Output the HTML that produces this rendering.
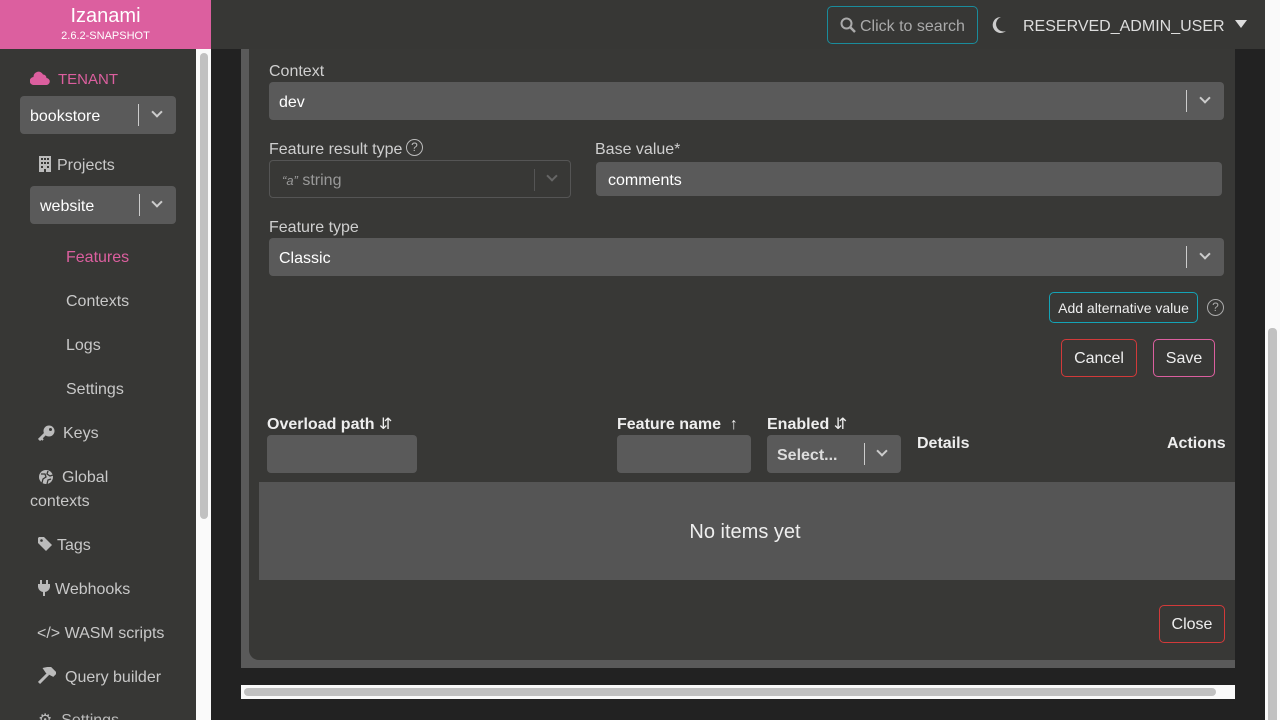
<!DOCTYPE html>
<html style="overflow:hidden;height:720px"><head><meta charset="utf-8"><style>
*{box-sizing:border-box;margin:0;padding:0}
html,body{overflow:hidden}
body{width:1280px;height:720px;background:#222;font-family:"Liberation Sans",sans-serif;color:#e8e8e8;position:relative;font-size:16px;line-height:1.65}
.abs{position:absolute}
.side{left:0;top:0;width:196px;height:720px;background:#373735}
.brand{left:0;top:0;width:211px;height:49px;background:#dc5f9f;text-align:center;color:#fff;line-height:1.15}
.sbar{left:196px;top:49px;width:15px;height:671px;background:#fafafa}
.sbar i{position:absolute;left:4px;top:4px;width:8px;height:466px;background:#c1c1c1;border-radius:4px}
.top{left:211px;top:0;width:1054px;height:49px;background:#373735}
.vs{left:1265px;top:0;width:15px;height:720px;background:#fafafa}
.vs i{position:absolute;left:3px;top:328px;width:9px;height:400px;background:#c1c1c1;border-radius:4px}
.sel{background:#5a5a5a;border-radius:4px;color:#fff}
.nav{color:#c8c8c8;font-size:16px}
.chev{position:absolute;width:8px;height:8px;border-right:2px solid #ccc;border-bottom:2px solid #ccc;transform:rotate(45deg)}
.sep{position:absolute;width:1px;background:#ccc}
.lbl{color:#cfcfcf;font-size:16px}
.btn{border-radius:5px;background:transparent;color:#eee;display:flex;align-items:center;justify-content:center;line-height:1}
.th{font-weight:bold;color:#eee;font-size:16px}
</style></head><body>
<div class="abs side"></div>
<div class="abs brand"><div style="font-size:20px;padding-top:5px">Izanami</div><div style="font-size:11px;margin-top:2px">2.6.2-SNAPSHOT</div></div>
<div class="abs sbar"><i></i></div>
<div class="abs top"></div>
<div class="abs vs"><i></i></div>

<svg class="abs" style="left:30px;top:71px" width="20" height="14" viewBox="0 0 20 14"><path d="M4 14a4 4 0 0 1-.5-8A5 5 0 0 1 13 3.5 3.5 3.5 0 0 1 16.5 7 3.5 3.5 0 0 1 16 14z" fill="#dc5f9f"/></svg>
<div class="abs" style="left:58px;top:68px;color:#dc5f9f;font-size:15px">TENANT</div>
<div class="abs sel" style="left:20px;top:96px;width:156px;height:38px"><span class="abs" style="left:10px;top:8px">bookstore</span><div class="sep" style="left:118px;top:8px;height:22px"></div><div class="chev" style="left:133px;top:12px"></div></div>
<svg class="abs" style="left:38px;top:156px" width="14" height="16" viewBox="0 0 14 16"><path d="M1 0h12v16H8v-3H6v3H1z" fill="#bbb"/><g fill="#373735"><rect x="3" y="2" width="2" height="2"/><rect x="6" y="2" width="2" height="2"/><rect x="9" y="2" width="2" height="2"/><rect x="3" y="6" width="2" height="2"/><rect x="6" y="6" width="2" height="2"/><rect x="9" y="6" width="2" height="2"/><rect x="3" y="10" width="2" height="2"/><rect x="9" y="10" width="2" height="2"/></g></svg>
<div class="abs nav" style="left:57px;top:153px">Projects</div>
<div class="abs sel" style="left:30px;top:186px;width:146px;height:38px"><span class="abs" style="left:10px;top:8px">website</span><div class="sep" style="left:109px;top:8px;height:22px"></div><div class="chev" style="left:123px;top:12px"></div></div>
<div class="abs" style="left:66px;top:245px;color:#dc5f9f">Features</div>
<div class="abs nav" style="left:66px;top:289px">Contexts</div>
<div class="abs nav" style="left:66px;top:333px">Logs</div>
<div class="abs nav" style="left:66px;top:377px">Settings</div>
<svg class="abs" style="left:38px;top:425px" width="17" height="16" viewBox="0 0 17 16"><circle cx="11" cy="6" r="5.5" fill="#bbb"/><circle cx="12.5" cy="4.5" r="1.5" fill="#373735"/><path d="M7 9L1 15" stroke="#bbb" stroke-width="3"/><path d="M3 13l2 2" stroke="#bbb" stroke-width="2"/></svg>
<div class="abs nav" style="left:63px;top:421px">Keys</div>
<svg class="abs" style="left:38px;top:469px" width="16" height="16" viewBox="0 0 16 16"><circle cx="8" cy="8" r="7" fill="#bbb"/><path d="M3 5h4l1 3-3 2-1 4M10 2l-1 3 3 2 3-1M9 15l1-4 3-1" stroke="#373735" stroke-width="1.3" fill="none"/></svg>
<div class="abs nav" style="left:62px;top:465px">Global</div>
<div class="abs nav" style="left:30px;top:489px">contexts</div>
<svg class="abs" style="left:38px;top:537px" width="14" height="14" viewBox="0 0 14 14"><path d="M0 1v5l8 8 6-6-8-8H1z" fill="#bbb"/><circle cx="3.5" cy="3.5" r="1.3" fill="#373735"/></svg>
<div class="abs nav" style="left:57px;top:533px">Tags</div>
<svg class="abs" style="left:38px;top:580px" width="12" height="16" viewBox="0 0 12 16"><path d="M2 0h2v4h4V0h2v4h2v3a6 6 0 0 1-5 5v4H5v-4A6 6 0 0 1 0 7V4h2z" fill="#bbb"/></svg>
<div class="abs nav" style="left:55px;top:577px">Webhooks</div>
<div class="abs nav" style="left:37px;top:621px">&lt;/&gt; WASM scripts</div>
<svg class="abs" style="left:38px;top:667px" width="18" height="18" viewBox="0 0 18 18"><path d="M1 16l9-9M7 2l5-1 5 5-2 2-6-3z" stroke="#bbb" stroke-width="3" fill="#bbb"/></svg>
<div class="abs nav" style="left:65px;top:665px">Query builder</div>
<div class="abs nav" style="left:38px;top:708px;color:#bbb">&#9881;&nbsp; Settings</div>

<div class="abs" style="left:827px;top:6px;width:151px;height:38px;border:1px solid #1a8c9c;border-radius:5px"></div>
<svg class="abs" style="left:840px;top:17px" width="16" height="16" viewBox="0 0 16 16"><circle cx="6.5" cy="6.5" r="5" stroke="#aaa" stroke-width="2" fill="none"/><path d="M10 10l5 5" stroke="#aaa" stroke-width="2.5"/></svg>
<div class="abs" style="left:860px;top:14px;color:#aaa">Click to search</div>
<svg class="abs" style="left:991px;top:16px" width="16" height="17" viewBox="0 0 16 17"><path d="M10 1a8 8 0 1 0 5 14A7 7 0 0 1 10 1z" fill="#ccc"/></svg>
<div class="abs" style="left:1023px;top:14px;color:#ddd">RESERVED_ADMIN_USER</div>
<div class="abs" style="left:1235px;top:20px;width:0;height:0;border-left:6px solid transparent;border-right:6px solid transparent;border-top:8px solid #ddd"></div>

<div class="abs" style="left:241px;top:49px;width:994px;height:619px;background:#5a5a5a"></div>
<div class="abs" style="left:249px;top:49px;width:986px;height:611px;background:#383836;border-bottom-left-radius:10px"></div>
<div class="abs" style="left:241px;top:685px;width:994px;height:14px;background:#fafafa"><i class="abs" style="left:3px;top:3px;width:972px;height:8px;background:#c1c1c1;border-radius:4px"></i></div>

<div class="abs lbl" style="left:269px;top:59px">Context</div>
<div class="abs sel" style="left:269px;top:82px;width:955px;height:38px"><span class="abs" style="left:10px;top:8px">dev</span><div class="sep" style="left:917px;top:8px;height:22px"></div><div class="chev" style="left:932px;top:12px"></div></div>
<div class="abs lbl" style="left:269px;top:137px">Feature result type</div>
<div class="abs" style="left:406px;top:139px;width:17px;height:17px;border:1.5px solid #bbb;border-radius:50%;font-size:12px;color:#bbb;text-align:center;line-height:15px">?</div>
<div class="abs" style="left:269px;top:160px;width:302px;height:38px;border:1px solid #555;border-radius:4px"><span class="abs" style="left:12px;top:7px;color:#999"><i style="font-size:13px">“a”</i> string</span><div class="sep" style="left:264px;top:8px;height:22px;background:#555"></div><div class="chev" style="left:278px;top:11px;border-color:#666"></div></div>
<div class="abs lbl" style="left:595px;top:137px">Base value*</div>
<div class="abs sel" style="left:596px;top:162px;width:626px;height:34px"><span class="abs" style="left:12px;top:6px">comments</span></div>
<div class="abs lbl" style="left:269px;top:215px">Feature type</div>
<div class="abs sel" style="left:269px;top:238px;width:955px;height:38px"><span class="abs" style="left:10px;top:8px">Classic</span><div class="sep" style="left:917px;top:8px;height:22px"></div><div class="chev" style="left:932px;top:12px"></div></div>

<div class="abs btn" style="left:1049px;top:292px;width:149px;height:31px;border:1px solid #14a3b6;font-size:14px;padding-top:1px">Add alternative value</div>
<div class="abs" style="left:1207px;top:299px;width:17px;height:17px;border:1.5px solid #aaa;border-radius:50%;font-size:12px;color:#aaa;text-align:center;line-height:15px">?</div>
<div class="abs btn" style="left:1061px;top:339px;width:76px;height:38px;border:1px solid #d23a3a;padding-top:2px">Cancel</div>
<div class="abs btn" style="left:1153px;top:339px;width:62px;height:38px;border:1px solid #dc5f9f;padding-top:2px">Save</div>

<div class="abs th" style="left:267px;top:412px">Overload path <span style="font-weight:normal">&#8693;</span></div>
<div class="abs sel" style="left:267px;top:435px;width:150px;height:38px"></div>
<div class="abs th" style="left:617px;top:412px">Feature name <span style="font-weight:normal">&nbsp;&#8593;</span></div>
<div class="abs sel" style="left:617px;top:435px;width:134px;height:38px"></div>
<div class="abs th" style="left:767px;top:412px">Enabled <span style="font-weight:normal">&#8693;</span></div>
<div class="abs sel" style="left:767px;top:435px;width:134px;height:38px"><span class="abs th" style="left:10px;top:8px;color:#ddd">Select...</span><div class="sep" style="left:97px;top:8px;height:22px"></div><div class="chev" style="left:111px;top:12px"></div></div>
<div class="abs th" style="left:917px;top:431px">Details</div>
<div class="abs th" style="left:1167px;top:431px">Actions</div>
<div class="abs" style="left:259px;top:482px;width:976px;height:98px;background:#555;display:flex;align-items:center;justify-content:center;font-size:20px;color:#eee;padding-top:2px;line-height:1;padding-right:4px">No items yet</div>

<div class="abs btn" style="left:1159px;top:605px;width:66px;height:38px;border:1px solid #d23a3a;padding-top:2px">Close</div>
</body></html>
